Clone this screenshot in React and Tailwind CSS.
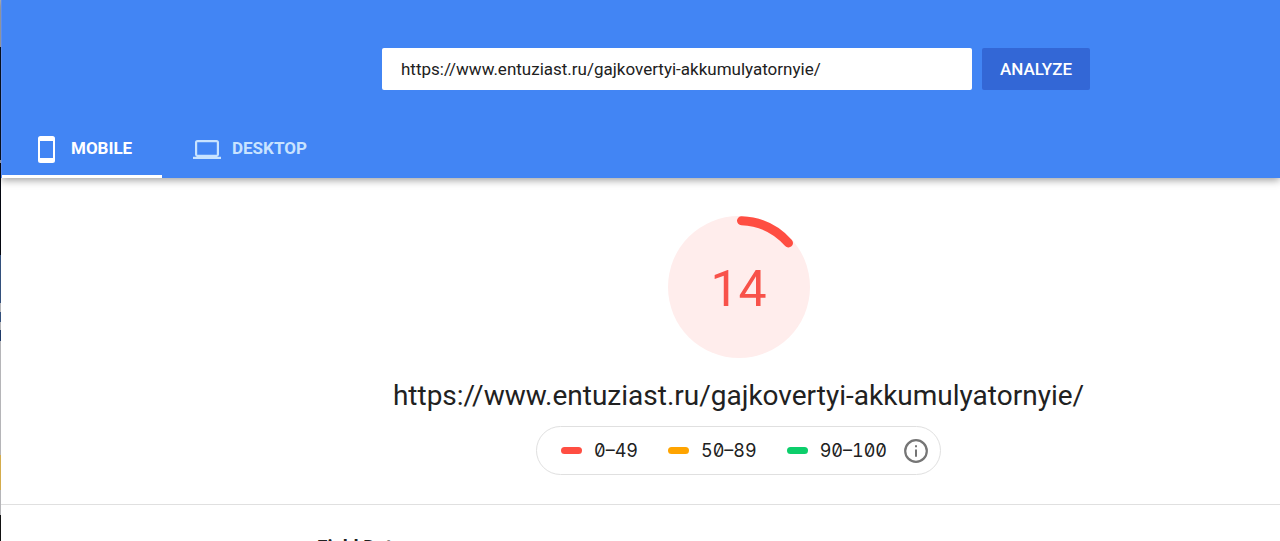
import { useState } from 'react'

const PAGE_URL = 'https://www.entuziast.ru/gajkovertyi-akkumulyatornyie/'

const RANGES = [
  { label: '0–49', color: 'bg-[#ff4e42]' },
  { label: '50–89', color: 'bg-[#ffa400]' },
  { label: '90–100', color: 'bg-[#0cce6b]' },
]

function PhoneIcon() {
  return (
    <svg width="17" height="27" viewBox="0 0 17 27" fill="currentColor" aria-hidden="true">
      <path fillRule="evenodd" d="M2.5 0h12A2.5 2.5 0 0 1 17 2.500v22a2.500 2.500 0 0 1-2.500 2.500h-12A2.500 2.500 0 0 1 0 24.500v-22A2.500 2.500 0 0 1 2.500 0zM2 5v17h13V5z" />
    </svg>
  )
}

function LaptopIcon() {
  return (
    <svg width="28" height="19" viewBox="0 0 28 19" fill="currentColor" aria-hidden="true">
      <path fillRule="evenodd" d="M4.500 0h19A2.500 2.500 0 0 1 26 2.500v12a2.500 2.500 0 0 1-2 2.300h4V19H0v-2.200h4a2.500 2.500 0 0 1-2-2.300v-12A2.500 2.500 0 0 1 4.500 0zM4.200 2.200v12.600h19.600V2.200z" />
    </svg>
  )
}

function InfoIcon() {
  return (
    <svg width="24" height="24" viewBox="0 0 24 24" aria-hidden="true">
      <circle cx="12" cy="12" r="10.800" fill="none" stroke="currentColor" strokeWidth="2.200" />
      <path d="M11 6.200h2v2h-2zM11 10.400h2v7.400h-2z" fill="currentColor" />
    </svg>
  )
}

function Gauge({ score }) {
  return (
    <div className="relative size-[142px]">
      <svg className="size-full" viewBox="0 0 142 142" aria-hidden="true">
        <circle cx="71" cy="71" r="71" fill="#ffedec" />
        <path d="M73.500 4.700A66.400 66.400 0 0 1 120.500 27" fill="none" stroke="#ff4e42" strokeWidth="9" strokeLinecap="round" />
      </svg>
      <div className="absolute inset-0 flex items-center justify-center pt-1 text-[50px] leading-none text-[#f8524a]">
        {score}
      </div>
    </div>
  )
}

function Tab({ active, icon, label, onClick }) {
  return (
    <button
      type="button"
      role="tab"
      aria-selected={active}
      onClick={onClick}
      className={`flex h-14 items-center border-b-3 pt-px text-[17px] font-bold ${
        active ? 'border-white text-white' : 'border-transparent text-[#c8e3ff]'
      } ${label === 'MOBILE' ? 'w-40 gap-4 pl-9' : 'gap-[11px] px-[31px]'}`}
    >
      {icon}
      {label}
    </button>
  )
}

export default function App() {
  const [url, setUrl] = useState(PAGE_URL)
  const [tab, setTab] = useState('mobile')

  return (
    <div className="flex h-screen overflow-hidden bg-white font-['Roboto',sans-serif] text-[#212121]">
      {/* Sliver of the desktop behind the window */}
      <div className="w-px shrink-0 bg-[linear-gradient(#aeb4bd_0_47px,#081426_47px_160px,#a8b4cc_160px_163px,#05070f_163px_255px,#33507c_255px_303px,#b5b5b8_303px_312px,#33507c_312px_322px,#b5b5b8_322px_330px,#1f3a68_330px_341px,#b5b5b8_341px_455px,#d4ac4c_455px_490px,#b5b5b8_490px_515px,#111_515px)]" />

      <div className="min-w-0 flex-1">
        <header className="relative border-l border-[#5b8def] bg-[#4285f4] shadow-[0_2px_8px_rgba(0,0,0,0.4)]">
          <form
            className="flex justify-center gap-[10px] pt-12 pl-[190px]"
            onSubmit={e => e.preventDefault()}
          >
            <input
              type="url"
              aria-label="Web page URL"
              value={url}
              onChange={e => setUrl(e.target.value)}
              className="h-[42px] w-[590px] rounded-xs bg-white px-[19px] text-[17px] outline-none"
            />
            <button type="submit" className="h-[42px] w-[108px] rounded-xs bg-[#3367d6] pt-px text-[17px] font-medium text-white">
              ANALYZE
            </button>
          </form>

          <div role="tablist" className="mt-8 flex">
            <Tab active={tab === 'mobile'} icon={<PhoneIcon />} label="MOBILE" onClick={() => setTab('mobile')} />
            <Tab active={tab === 'desktop'} icon={<LaptopIcon />} label="DESKTOP" onClick={() => setTab('desktop')} />
          </div>
        </header>

        <main>
          <section className="flex flex-col items-center border-b border-[#e0e0e0] pt-[38px] pb-[29px] pl-[196px]">
            <Gauge score={14} />
            <h1 className="mt-5 text-[28px] leading-9">{PAGE_URL}</h1>
            <div className="mt-3 flex h-[49px] items-center rounded-full border border-[#e0e0e0] pr-3 pl-6">
              <ul className="flex gap-[30px]">
                {RANGES.map(range => (
                  <li key={range.label} className="flex items-center gap-3 font-['Inter',sans-serif] text-[18px] slashed-zero tabular-nums">
                    <span className={`h-[7px] w-[21px] rounded-full ${range.color}`} />
                    {range.label}
                  </li>
                ))}
              </ul>
              <button type="button" aria-label="About the score scale" className="ml-[17px] text-[#757575]">
                <InfoIcon />
              </button>
            </div>
          </section>

          <section className="pt-7 pl-[316px]">
            <h2 className="text-[19px] leading-7 font-bold">Field Data</h2>
          </section>
        </main>
      </div>
    </div>
  )
}
